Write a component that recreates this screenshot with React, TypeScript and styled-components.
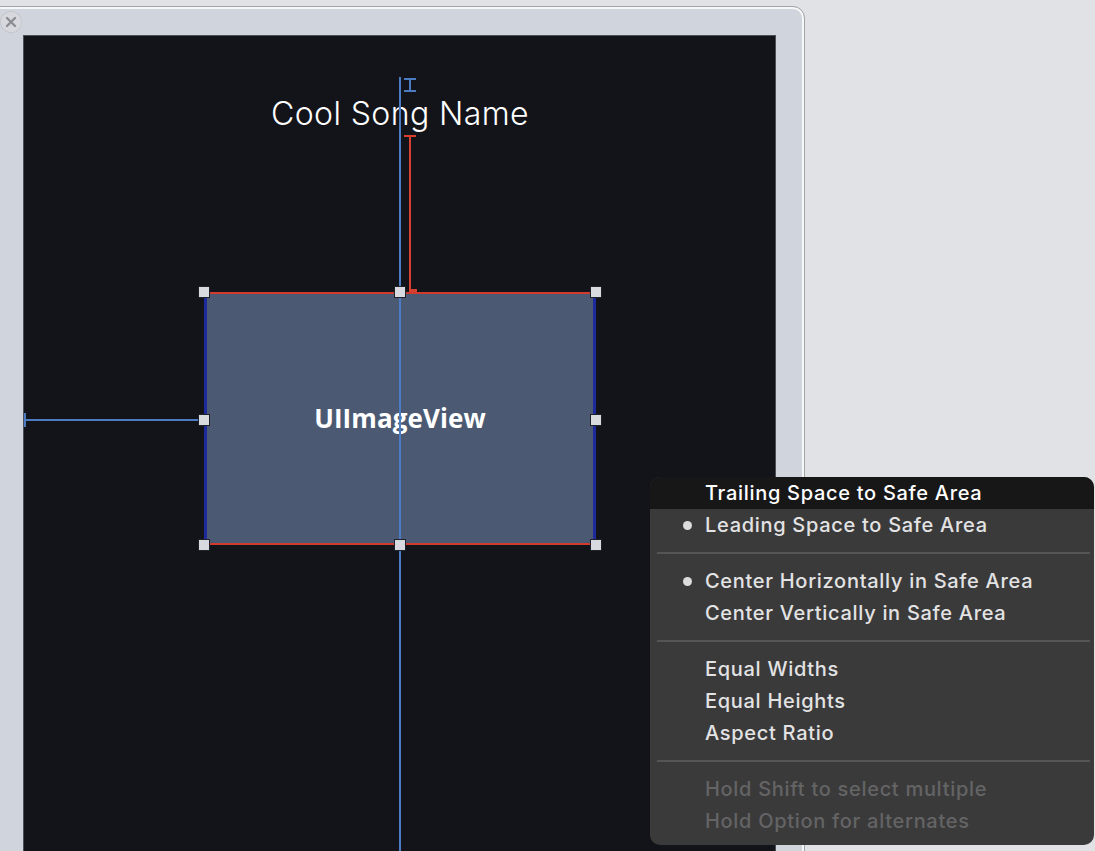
import React from "react";
import styled, { createGlobalStyle } from "styled-components";

const Global = createGlobalStyle`
  html, body { margin: 0; padding: 0; background: #e1e2e5; overflow: hidden; }
  #root { width: 1095px; height: 851px; }
`;

const Page = styled.div`
  position: relative;
  width: 1095px;
  height: 851px;
  overflow: hidden;
  background: #e1e2e5;
  font-family: Inter, "Liberation Sans", sans-serif;
`;

const DeviceFrame = styled.div`
  margin-top: 6px;
  margin-left: -12px;
  width: 817px;
  height: 900px;
  box-sizing: border-box;
  border: 1px solid #a2a4a8;
  border-radius: 12px;
  box-shadow: inset 0 0 0 2px #f6f7f8;
  background: #d0d4dc;
  padding: 28px 0 0 34px;
`;

const Screen = styled.div`
  position: relative;
  width: 753px;
  height: 880px;
  box-sizing: border-box;
  border: 1px solid #4c4f56;
  background: #13141a;
`;

const SongTitle = styled.div`
  position: absolute;
  left: 176px;
  top: 58px;
  width: 400px;
  text-align: center;
  color: #ffffff;
  font-size: 32px;
  font-weight: 300;
  letter-spacing: 0.4px;
  line-height: 40px;
  white-space: nowrap;
`;

const VLine = styled.div<{ $color: string; $left: number; $top: number; $height?: number }>`
  position: absolute;
  left: ${(p) => p.$left}px;
  top: ${(p) => p.$top}px;
  width: 2px;
  ${(p) => (p.$height ? `height: ${p.$height}px;` : "bottom: 0;")}
  background: ${(p) => p.$color};
  z-index: 3;
`;

const HLine = styled.div<{ $color: string; $left: number; $top: number; $width: number; $h?: number }>`
  position: absolute;
  left: ${(p) => p.$left}px;
  top: ${(p) => p.$top}px;
  width: ${(p) => p.$width}px;
  height: ${(p) => p.$h ?? 2}px;
  background: ${(p) => p.$color};
  z-index: 3;
`;

const ImageView = styled.div`
  position: absolute;
  left: 180px;
  top: 256px;
  width: 392px;
  height: 253px;
  box-sizing: border-box;
  background: #4b5a72;
  border-top: 2px solid #d23a2e;
  border-bottom: 2px solid #d23a2e;
  border-left: 3px solid #1c2a9c;
  border-right: 3px solid #1c2a9c;
  display: flex;
  align-items: center;
  justify-content: center;
  z-index: 2;
`;

const ImageLabel = styled.span`
  color: #ffffff;
  font-family: "Open Sans", "Liberation Sans", sans-serif;
  font-weight: 700;
  font-size: 26px;
  letter-spacing: 0.1px;
  margin-top: -2px;
`;

const Handle = styled.div<{ $x: number; $y: number }>`
  position: absolute;
  left: ${(p) => p.$x - 6}px;
  top: ${(p) => p.$y - 6}px;
  width: 10px;
  height: 10px;
  background: #d9dadf;
  border: 1px solid #1e2129;
  z-index: 4;
`;

const CloseButton = styled.div`
  position: absolute;
  left: 0px;
  top: 11px;
  width: 20px;
  height: 20px;
  border-radius: 50%;
  border: 1px dotted #b4b6ba;
  background: #d6d8dd;
  display: flex;
  align-items: center;
  justify-content: center;
`;

const Menu = styled.div`
  position: absolute;
  left: 650px;
  top: 477px;
  width: 444px;
  height: 368px;
  box-sizing: border-box;
  background: #3a3a3b;
  border-radius: 10px;
  padding-bottom: 8px;
  overflow: hidden;
  display: flex;
  flex-direction: column;
  z-index: 10;
`;

const MenuItem = styled.div<{ $highlight?: boolean; $disabled?: boolean }>`
  position: relative;
  height: 32px;
  display: flex;
  align-items: center;
  padding-left: 55px;
  font-size: 20px;
  font-weight: 500;
  letter-spacing: 0.7px;
  color: ${(p) => (p.$disabled ? "#646465" : p.$highlight ? "#ffffff" : "#e3e3e4")};
  background: ${(p) => (p.$highlight ? "#171718" : "transparent")};
  white-space: nowrap;
`;

const Bullet = styled.span`
  position: absolute;
  left: 33px;
  top: 12px;
  width: 9px;
  height: 9px;
  border-radius: 50%;
  background: #dcdcdd;
`;

const Separator = styled.div`
  margin: 11px 4px 11px 7px;
  height: 2px;
  background: #555556;
`;

const handles: [number, number][] = [
  [180, 256], [376, 256], [572, 256],
  [180, 384], [572, 384],
  [180, 509], [376, 509], [572, 509],
];

export default function App() {
  return (
    <Page>
      <Global />
      <DeviceFrame>
        <Screen>
          <SongTitle>Cool Song Name</SongTitle>
          {/* blue centering guide with I-beam */}
          <VLine $color="#4b7cc2" $left={375} $top={41} />
          <HLine $color="#4b7cc2" $left={380} $top={42} $width={12} />
          <HLine $color="#4b7cc2" $left={380} $top={54} $width={12} />
          <VLine $color="#4b7cc2" $left={385} $top={42} $height={14} />
          {/* red top spacing constraint */}
          <HLine $color="#d8402f" $left={380} $top={99} $width={12} />
          <VLine $color="#d8402f" $left={385} $top={99} $height={156} />
          <HLine $color="#d8402f" $left={385} $top={253} $width={8} $h={3} />
          {/* blue leading constraint */}
          <HLine $color="#4b7cc2" $left={0} $top={383} $width={180} />
          <VLine $color="#4b7cc2" $left={0} $top={377} $height={14} />
          <ImageView>
            <ImageLabel>UIImageView</ImageLabel>
          </ImageView>
          {handles.map(([x, y], i) => (
            <Handle key={i} $x={x} $y={y} />
          ))}
        </Screen>
      </DeviceFrame>
      <CloseButton>
        <svg width="12" height="12" viewBox="0 0 12 12">
          <path d="M2 2 L10 10 M10 2 L2 10" stroke="#8b8d92" strokeWidth="2.4" strokeLinecap="round" />
        </svg>
      </CloseButton>
      <Menu>
        <MenuItem $highlight>Trailing Space to Safe Area</MenuItem>
        <MenuItem><Bullet />Leading Space to Safe Area</MenuItem>
        <Separator />
        <MenuItem><Bullet />Center Horizontally in Safe Area</MenuItem>
        <MenuItem>Center Vertically in Safe Area</MenuItem>
        <Separator />
        <MenuItem>Equal Widths</MenuItem>
        <MenuItem>Equal Heights</MenuItem>
        <MenuItem>Aspect Ratio</MenuItem>
        <Separator />
        <MenuItem $disabled>Hold Shift to select multiple</MenuItem>
        <MenuItem $disabled>Hold Option for alternates</MenuItem>
      </Menu>
    </Page>
  );
}
